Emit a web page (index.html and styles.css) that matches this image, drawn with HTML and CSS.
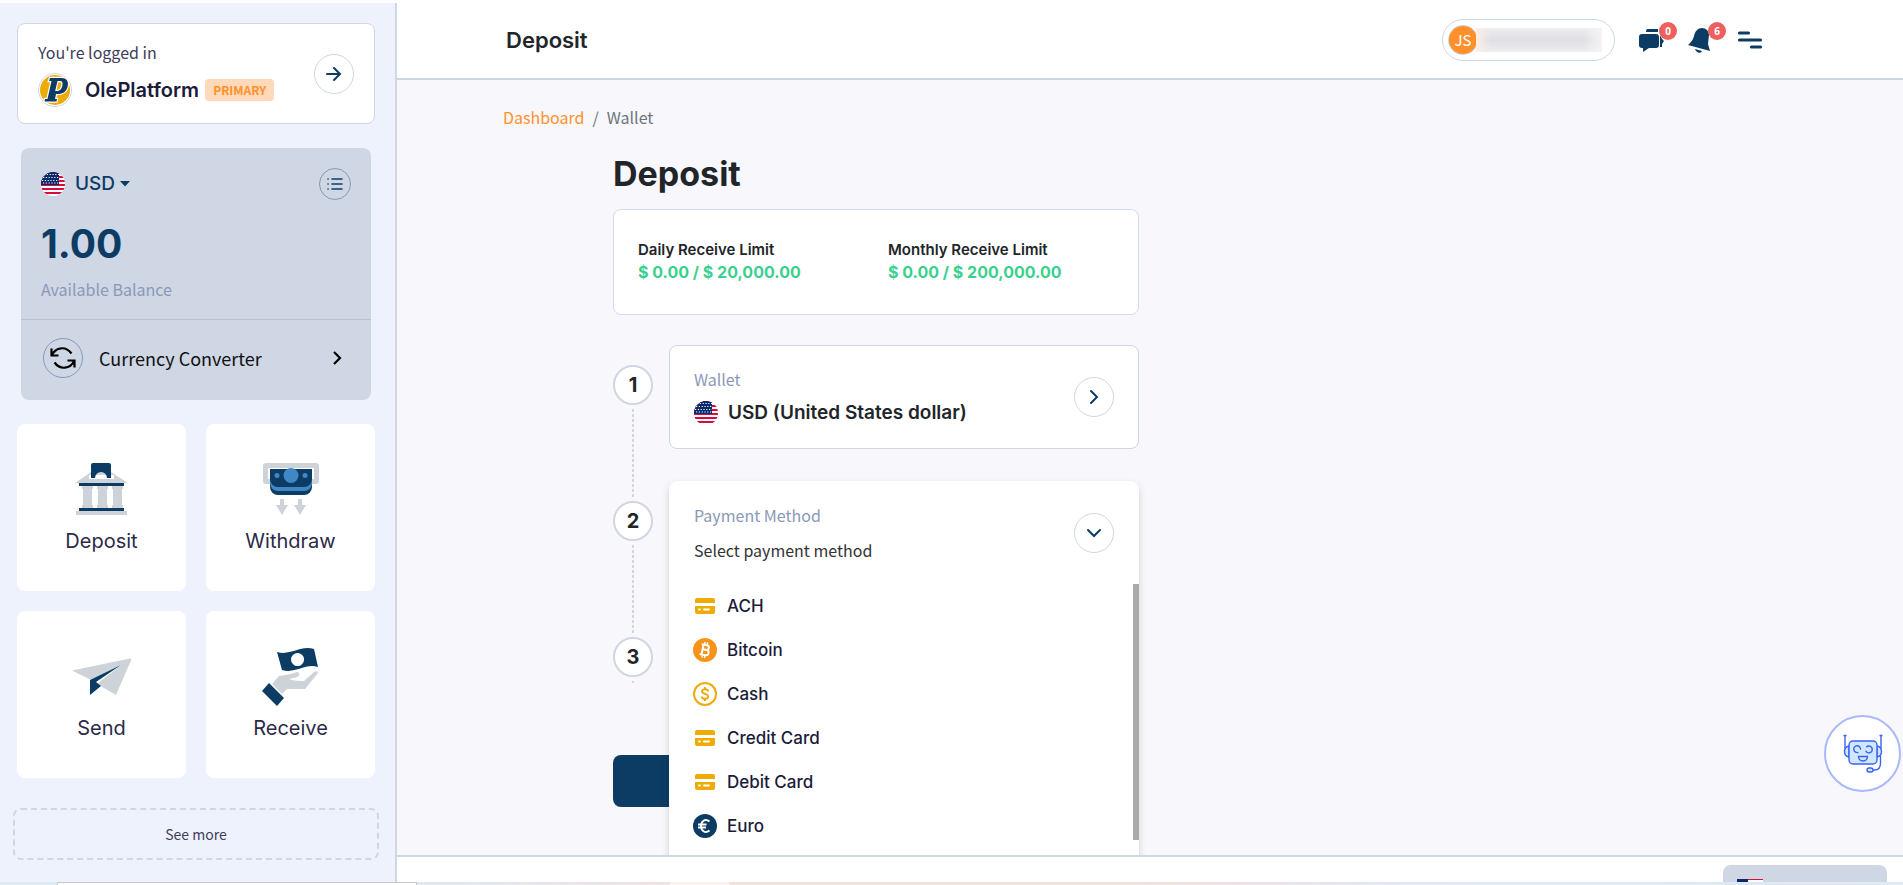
FILE: index.html
```html
<!DOCTYPE html>
<html lang="en">
<head>
<meta charset="utf-8">
<title>Deposit</title>
<link rel="stylesheet" href="styles.css">
</head>
<body>
<svg class="defs" aria-hidden="true">
  <defs>
    <symbol id="flag-us" viewBox="0 0 24 24">
      <clipPath id="round"><circle cx="12" cy="12" r="12"/></clipPath>
      <g clip-path="url(#round)">
        <rect width="24" height="24" fill="#fff"/>
        <path d="M0 1h24M0 5h24M0 9h24M0 13h24M0 17h24M0 21h24" stroke="#d80b3c" stroke-width="2"/>
        <rect width="18" height="13" fill="#0a2a6c"/>
        <path d="M3 2.500h15M2 5.500h16M1 8.500h17M2 11h16" stroke="#fff" stroke-width="1.200" stroke-dasharray="1.200 1.600"/>
      </g>
    </symbol>
    <symbol id="card" viewBox="0 0 24 24">
      <path d="M4 4h16a2 2 0 0 1 2 2v3H2V6a2 2 0 0 1 2-2z" fill="#eeaa05"/>
      <path fill-rule="evenodd" d="M2 12h20v6a2 2 0 0 1-2 2H4a2 2 0 0 1-2-2zM6 14.500a1 1 0 0 0 0 2h1a1 1 0 0 0 0-2zM11 14.500a1 1 0 0 0 0 2h5a1 1 0 0 0 0-2z" fill="#eeaa05"/>
    </symbol>
  </defs>
</svg>
<div class="app">
  <aside class="sidebar">
    <section class="account">
      <div>
        <p class="account-note">You're logged in</p>
        <div class="account-name">
          <svg class="logo" viewBox="0 0 34 34" aria-hidden="true">
            <circle cx="17" cy="17" r="16.500" fill="#fff" stroke="#cfd6e4"/>
            <circle cx="17" cy="17" r="15" fill="#eeaa05"/>
            <path fill-rule="evenodd" d="M12 5h12c5 0 7 4 5.500 9-1.500 5-5 7-9.500 7h-2l-1 5h2l-.5 2.500H6.500L7 26h2.500l4-18H11zM19.500 8l-2.300 10h1.800c2.500 0 4.500-1.500 5.300-5 .7-3.200 0-5-2.300-5z" fill="#0c3c64" stroke="#fff" stroke-width="2.400" paint-order="stroke"/>
          </svg>
          <strong>OlePlatform</strong>
          <span class="badge">PRIMARY</span>
        </div>
      </div>
      <button class="round-btn" aria-label="Switch account"><svg width="16" height="16" viewBox="0 0 16 16"><path d="M1 8h13M8 2l6 6-6 6" fill="none" stroke="#0c3c64" stroke-width="2" stroke-linecap="round"/></svg></button>
    </section>

    <section class="balance">
      <div class="balance-top">
        <div class="balance-head">
          <button class="currency"><svg width="24" height="24"><use href="#flag-us"/></svg>USD<svg class="caret" width="10" height="6" viewBox="0 0 10 6"><path d="M0 0h10L5 5.500z" fill="#0c3c64"/></svg></button>
          <button class="round-btn small" aria-label="Wallet list"><svg width="16" height="12" viewBox="0 0 16 12"><path d="M5 1h10M5 6h10M5 11h10M1 1h.1M1 6h.1M1 11h.1" stroke="#0c3c64" stroke-width="1.600" stroke-linecap="round"/></svg></button>
        </div>
        <p class="amount">1.00</p>
        <p class="amount-label">Available Balance</p>
      </div>
      <a class="converter" href="#converter">
        <span class="round-icon"><svg width="26" height="22" viewBox="0 0 26 22"><path d="M1.500 1.500v7h7M24.500 20.500v-7h-7M1.500 8.500C6 -.5 16-1 21.500 6.500M24.500 13.500C20 22.500 10 23 4.500 15.500" fill="none" stroke="#000" stroke-width="2.200"/></svg></span>
        <span>Currency Converter</span>
        <svg class="chev" width="10" height="16" viewBox="0 0 10 16"><path d="M2 2l6 6-6 6" fill="none" stroke="#000" stroke-width="2.200"/></svg>
      </a>
    </section>

    <nav class="tiles">
      <a class="tile" href="#deposit">
        <svg width="60" height="60" viewBox="0 0 60 60"><path d="M3 23L19 12h20l17 11z" fill="#ced3d9"/><path d="M17 15h25v4H17z" fill="#fff"/><path d="M21 3h16a2 2 0 0 1 2 2v13h-4a6 6 0 0 0-12 0h-4V5a2 2 0 0 1 2-2z" fill="#0c3c64"/><path d="M7 23h45v3H7zM7 48h45v3H7z" fill="#0c3c64"/><path d="M10 26h11v3h-1v16h1v3H10v-3h1V29h-1zM25 26h11v3h-1v16h1v3H25v-3h1V29h-1zM40 26h11v3h-1v16h1v3H40v-3h1V29h-1zM4 51h51v4H4z" fill="#ced3d9"/></svg>
        Deposit
      </a>
      <a class="tile" href="#withdraw">
        <svg width="60" height="60" viewBox="0 0 60 60"><path d="M5 3h50a3 3 0 0 1 3 3v15a3 3 0 0 1-3 3h-5v-5h3V8H7v11h3v5H5a3 3 0 0 1-3-3V6a3 3 0 0 1 3-3z" fill="#ced3d9"/><path d="M9 20h42v7a8 8 0 0 1-8 8H17a8 8 0 0 1-8-8z" fill="#0c3c64"/><path d="M9 14h42v9a8 8 0 0 1-8 8H17a8 8 0 0 1-8-8z" fill="#4287c5"/><path d="M9 9h42v10a8 8 0 0 1-8 8H17a8 8 0 0 1-8-8z" fill="#0c3c64"/><g fill="#4287c5"><circle cx="30" cy="15.500" r="7.500"/><circle cx="16" cy="15.500" r="2.500"/><circle cx="44" cy="15.500" r="2.500"/></g><path d="M19 39h4v6h4l-6 10-6-10h4zM37 39h4v6h4l-6 10-6-10h4z" fill="#ced3d9"/></svg>
        Withdraw
      </a>
      <a class="tile" href="#send">
        <svg width="60" height="60" viewBox="0 0 60 60"><path d="M0 23.500L58 11.500q2 0 1 2L44 48 25 37 49 18 19 33z" fill="#ced3d9"/><path d="M18 33l31-15-25 17 5 4-11 9z" fill="#0c3c64"/></svg>
        Send
      </a>
      <a class="tile" href="#receive">
        <svg width="60" height="60" viewBox="0 0 60 60"><path fill-rule="evenodd" d="M16 5c14 4 23-7 37-3l4 18c-13-4-22 7-36 3zM36.500 6a6.500 6.500 0 1 0 .1 0z" fill="#0c3c64"/><path d="M11 37l7-8c5-1 10-1 18-4 3 0 3 4 0 5l-8 2c6 2 11 2 15 2l10-9c2-1 4-1 4 1L44 42H26l-5 5z" fill="#ced3d9"/><path d="M8 36L23 51l-7 8L1 44z" fill="#0c3c64"/></svg>
        Receive
      </a>
    </nav>
    <button class="more">See more</button>
  </aside>

  <div class="page">
    <header class="topbar">
      <div class="topbar-title">Deposit</div>
      <div class="topbar-tools">
        <button class="user" aria-label="Profile"><span class="avatar">JS</span><span class="user-name"></span></button>
        <button class="tool" aria-label="Messages"><svg width="26" height="26" viewBox="0 0 26 26"><path d="M8 2h11v3H7V4zM3 7h14a3 3 0 0 1 3 3v8a3 3 0 0 1-3 3h-7l-6 4v-4H3a3 3 0 0 1-3-3v-8a3 3 0 0 1 3-3zM21 8l2 4 2 2-2 3v3h-2z" fill="#0c3c64"/></svg><span class="count">0</span></button>
        <button class="tool" aria-label="Notifications"><svg width="26" height="26" viewBox="0 0 26 26"><path d="M14 1c4 0 7 3 7 7l-1 9 2 7L0 18c3-3 5-5 6-9 1-5 4-8 8-8zM7 22l7 2c-1 3-6 2-7-2z" fill="#0c3c64"/></svg><span class="count">6</span></button>
        <button class="tool" aria-label="Menu"><svg width="26" height="26" viewBox="0 0 26 26"><path d="M2.500 6h9M2.500 13h21M14.500 20h9" stroke="#0c3c64" stroke-width="3.200" stroke-linecap="round"/></svg></button>
      </div>
    </header>

    <main class="content">
      <div class="container">
        <nav class="crumbs"><a href="#dashboard">Dashboard</a><span>/</span><span>Wallet</span></nav>
        <div class="row">
          <div class="form">
            <h1>Deposit</h1>
            <div class="limits">
              <div><h2>Daily Receive Limit</h2><p>$ 0.00 / $ 20,000.00</p></div>
              <div><h2>Monthly Receive Limit</h2><p>$ 0.00 / $ 200,000.00</p></div>
            </div>
            <ol class="steps">
              <li class="step">
                <span class="num">1</span>
                <div class="panel">
                  <div class="panel-head">
                    <div><p class="label">Wallet</p><p class="wallet"><svg width="24" height="24"><use href="#flag-us"/></svg>USD (United States dollar)</p></div>
                    <button class="round-btn" aria-label="Choose wallet"><svg width="16" height="16" viewBox="0 0 16 16"><path d="M5 2l6 6-6 6" fill="none" stroke="#0c3c64" stroke-width="2" stroke-linecap="round"/></svg></button>
                  </div>
                </div>
              </li>
              <li class="step">
                <span class="num">2</span>
                <div class="panel open">
                  <div class="panel-head">
                    <div><p class="label">Payment Method</p><p class="hint">Select payment method</p></div>
                    <button class="round-btn" aria-label="Close payment methods"><svg width="16" height="16" viewBox="0 0 16 16"><path d="M2 5l6 6 6-6" fill="none" stroke="#0c3c64" stroke-width="2" stroke-linecap="round"/></svg></button>
                  </div>
                  <div class="methods">
                    <button><svg width="24" height="24"><use href="#card"/></svg>ACH</button>
                    <button><svg width="24" height="24" viewBox="0 0 24 24"><circle cx="12" cy="12" r="12" fill="#f7931a"/><g transform="rotate(12 12 12)" fill="none" stroke="#fff"><path d="M9.500 6.500v11M7.500 7h5.500a2.300 2.300 0 0 1 0 4.700H9.500h4a2.600 2.600 0 0 1 0 5.300h-6" stroke-width="2"/><path d="M10.500 4v3M13 4v3M10.500 17v3M13 17v3" stroke-width="1.400"/></g></svg>Bitcoin</button>
                    <button><svg width="24" height="24" viewBox="0 0 24 24"><circle cx="12" cy="12" r="11" fill="none" stroke="#eeaa05" stroke-width="2"/><path d="M15 9.500C15 6.500 9 6.500 9 9.300c0 3.200 6.200 2 6.200 5.300 0 3-6.400 3-6.400-.2M12 5v3M12 16v3" fill="none" stroke="#eeaa05" stroke-width="2"/></svg>Cash</button>
                    <button><svg width="24" height="24"><use href="#card"/></svg>Credit Card</button>
                    <button><svg width="24" height="24"><use href="#card"/></svg>Debit Card</button>
                    <button><svg width="24" height="24" viewBox="0 0 24 24"><circle cx="12" cy="12" r="12" fill="#0c3c64"/><path d="M16.500 7.500C12 4 8 7.500 8 12s4 8 8.500 4.500M5 10.500h8.500M5 13.500h8" fill="none" stroke="#fff" stroke-width="2"/></svg>Euro</button>
                    <span class="scroll-thumb"></span>
                  </div>
                </div>
              </li>
              <li class="step last"><span class="num">3</span></li>
            </ol>
            <button class="submit" aria-label="Continue"></button>
          </div>
        </div>
      </div>
      <button class="chat" aria-label="Chat"><svg width="40" height="40" viewBox="0 0 40 40" fill="#d0e7ff" stroke="#3a62f4" stroke-width="1.400"><path d="M6 12c-6 1-6 10 0 11zM34 12c6 1 6 10 0 11z"/><rect x="6" y="7" width="28" height="23" rx="4"/><path d="M2 14V2M38 14V2M.5 1.500h3M36.500 1.500h3M37.500 22v7c0 5-2 7-6 7h-2" fill="none"/><rect x="24" y="34" width="6" height="4" rx="2"/><path d="M15.500 22.500h9c-.5 6-8.500 6-9 0z"/><path d="M15.500 18.300a3.400 3.400 0 1 1 2-2.600M23.300 13.200a3.400 3.400 0 1 1-.6 3.600" fill="none"/></svg></button>
    </main>
    <footer class="footer"><div class="lang"><svg width="26" height="18" viewBox="0 0 26 18"><rect width="26" height="18" fill="#fff"/><path d="M0 .5h26M0 3.500h26" stroke="#d80b3c"/><rect width="11" height="9" fill="#0a2a6c"/></svg></div></footer>
  </div>
</div>
<div class="edge"><span class="edge-box"></span><span class="edge-tint"></span></div>
</body>
</html>
```
FILE: styles.css
```css
* { box-sizing: border-box; }
body {
  margin: 0;
  height: 100vh;
  display: flex;
  flex-direction: column;
  overflow: hidden;
  background: #fff;
  color: #212529;
  font-family: "Noto Sans CJK SC", "Noto Sans", sans-serif;
  font-size: 16px;
  line-height: 24px;
}
p, h1, h2, ol { margin: 0; padding: 0; }
button { font: inherit; color: inherit; border: 0; padding: 0; background: none; cursor: pointer; }
a { text-decoration: none; color: inherit; }
svg { display: block; flex: none; }
.defs { position: absolute; width: 0; height: 0; }

.app { flex: 1; min-height: 0; display: flex; }

.sidebar {
  width: 397px;
  flex: none;
  margin-top: 3px;
  padding: 20px 20px 0 17px;
  background: #eef2fc;
  border-right: 2px solid #cfd6e4;
}
.account {
  display: flex;
  align-items: center;
  justify-content: space-between;
  height: 101px;
  padding: 0 20px;
  background: #fff;
  border: 1px solid #cfd6e4;
  border-radius: 8px;
}
.account-note { line-height: 22px; color: #403e5a; }
.account-name { display: flex; align-items: center; margin-top: 10px; }
.logo { width: 34px; height: 34px; }
.account-name strong { margin-left: 13px; font: 600 20px/24px Inter, sans-serif; color: #1b1b3a; }
.badge {
  margin-left: 6px;
  padding: 0 8px;
  border-radius: 4px;
  background: #ffd9ba;
  color: #ff912c;
  font-size: 12px;
  font-weight: 700;
  line-height: 22px;
}
.round-btn {
  flex: none;
  width: 40px;
  height: 40px;
  display: grid;
  place-items: center;
  border: 1px solid #cfd6e4;
  border-radius: 50%;
}
.round-btn.small { width: 32px; height: 32px; border-color: #8a99b8; }

.balance { margin: 24px 4px 0; background: #cfd6e4; border-radius: 8px; }
.balance-top { padding: 20px 20px 18px; border-bottom: 1px solid #b9c3d3; }
.balance-head { display: flex; justify-content: space-between; align-items: center; }
.currency { display: flex; align-items: center; font: 500 19px/24px Inter, sans-serif; color: #0c3c64; }
.currency svg:first-child { margin-right: 10px; }
.caret { margin-left: 5px; }
.amount { margin-top: 20px; font: 700 39px/48px Inter, sans-serif; color: #0c3c64; }
.amount-label { margin-top: 9px; color: #8a99b8; }
.converter { display: flex; align-items: center; height: 80px; padding: 0 29px 4px 22px; color: #111; font-size: 18px; }
.round-icon { width: 40px; height: 40px; display: grid; place-items: center; margin-right: 16px; border: 1px solid #8a99b8; border-radius: 50%; }
.chev { margin-left: auto; }

.tiles { display: grid; grid-template-columns: 1fr 1fr; gap: 20px; margin-top: 24px; }
.tile {
  display: flex;
  flex-direction: column;
  align-items: center;
  gap: 8px;
  height: 167px;
  padding-top: 36px;
  border-radius: 8px;
  background: #fff;
  color: #2b2a47;
  font: 400 20px/26px Inter, sans-serif;
}
.more {
  display: block;
  width: calc(100% + 8px);
  height: 52px;
  margin: 30px -4px 0;
  border: 2px dashed #cfd6e4;
  border-radius: 8px;
  color: #403e5a;
  font-size: 14px;
}

.page { flex: 1; min-width: 0; display: flex; flex-direction: column; }
.topbar {
  flex: none;
  height: 80px;
  display: flex;
  align-items: center;
  justify-content: space-between;
  padding: 2px 140px 0 109px;
  border-bottom: 2px solid #cfd6e4;
}
.topbar-title { font: 600 22px/28px Inter, sans-serif; }
.topbar-tools { display: flex; align-items: center; gap: 23px; }
.user {
  width: 173px;
  height: 42px;
  display: flex;
  align-items: center;
  margin-right: 1px;
  padding-left: 6px;
  border: 1px solid #cfd6e4;
  border-radius: 21px;
}
.avatar { width: 28px; height: 28px; border-radius: 50%; background: #ff912c; box-shadow: 0 0 0 1px #cfd6e4; color: #fff; line-height: 28px; font-size: 15px; }
.user-name {
  width: 126px;
  height: 24px;
  margin-left: -1px;
  background:
    linear-gradient(90deg, #fbeee3, #f0f0f200 12%, #f0f0f200 85%, #f4f4f6),
    linear-gradient(#eeeef0, #dedee4 50%, #eeeef0);
}
.tool { position: relative; }
.count {
  position: absolute;
  top: -5px;
  right: -12px;
  width: 18px;
  height: 18px;
  border-radius: 50%;
  background: #ee6060;
  color: #fff;
  font: 700 10px/18px "Open Sans", sans-serif;
}

.content { position: relative; flex: 1; min-height: 0; overflow: hidden; background: #f7f7fc; }
.container { max-width: 1320px; margin: 0 auto; padding: 0 11px 0 13px; }
.crumbs { display: flex; gap: 8px; padding-top: 25px; color: #6c757d; }
.crumbs a { color: #ff912c; }
.row { display: grid; grid-template-columns: repeat(12, 1fr); column-gap: 24px; }
.form { grid-column: 2 / span 5; }
h1 { margin-top: 25px; font: 700 34px/40px Inter, sans-serif; }
.limits {
  display: grid;
  grid-template-columns: 1fr 1fr;
  margin-top: 15px;
  padding: 30px 0 30px 24px;
  background: #fff;
  border: 1px solid #d3daea;
  border-radius: 8px;
}
.limits h2 { font: 600 15px/20px Inter, sans-serif; }
.limits p { font: 700 16px/24px Inter, sans-serif; color: #3bd08f; }
.steps { list-style: none; margin-top: 30px; }
.step { position: relative; display: flex; align-items: flex-start; gap: 16px; height: 136px; padding-top: 20px; }
.step::after {
  content: "";
  position: absolute;
  left: 19px;
  top: 64px;
  width: 2px;
  height: 88px;
  background: repeating-linear-gradient(#cfd6e4 0 3px, transparent 3px 5px);
}
.step.last { height: 64px; }
.step.last::after { height: 2px; }
.num {
  flex: none;
  width: 40px;
  height: 40px;
  border: 2px solid #cfd6e4;
  border-radius: 50%;
  background: #fff;
  text-align: center;
  font: 700 20px/36px Inter, sans-serif;
}
.panel { position: relative; z-index: 1; flex: 1; margin-top: -20px; background: #fff; border: 1px solid #cfd6e4; border-radius: 8px; }
.panel.open { border-color: #fff; box-shadow: 0 4px 8px #00000026; z-index: 2; }
.panel-head { display: flex; align-items: center; justify-content: space-between; height: 102px; padding: 0 24px; }
.label { line-height: 22px; color: #8a99b8; }
.wallet { display: flex; align-items: center; gap: 10px; margin-top: 10px; font: 600 19px/26px Inter, sans-serif; }
.hint { margin-top: 12px; color: #333; }
.methods { position: relative; padding-bottom: 40px; }
.methods button { width: 100%; height: 44px; display: flex; align-items: center; gap: 10px; padding: 0 23px; font: 500 17px/24px Inter, sans-serif; color: #1b1b3a; }
.scroll-thumb { position: absolute; right: -1px; top: 0; width: 6px; height: 256px; background: #aaa; }
.submit { display: block; width: 100%; height: 52px; margin-top: 74px; border-radius: 8px; background: #0c3c64; }
.chat {
  position: absolute;
  right: 2px;
  bottom: 63px;
  width: 77px;
  height: 77px;
  display: grid;
  place-items: center;
  border: 2px solid #a9b9fb;
  border-radius: 50%;
  background: #fff;
}
.footer { flex: none; height: 27px; display: flex; justify-content: flex-end; padding: 8px 16px 0; border-top: 2px solid #cfd6e4; overflow: hidden; background: #fff; }
.lang { width: 164px; height: 40px; padding: 14px; border-radius: 8px; background: #cfd6e4; }

.edge { flex: none; display: flex; height: 3px; background: #dfe9f1; }
.edge-box { width: 360px; margin-left: 57px; background: #fff; border: 1px solid #c4c8cc; border-bottom: 0; }
.edge-tint { flex: 1; background: linear-gradient(90deg, #dfe8f1, #efe3e4 17%, #f9f2f1 17% 21%, #f2e2dd 21% 48%, #f0e1e5 54%, #e1e8f2 66%, #dfe9f1); }
```
